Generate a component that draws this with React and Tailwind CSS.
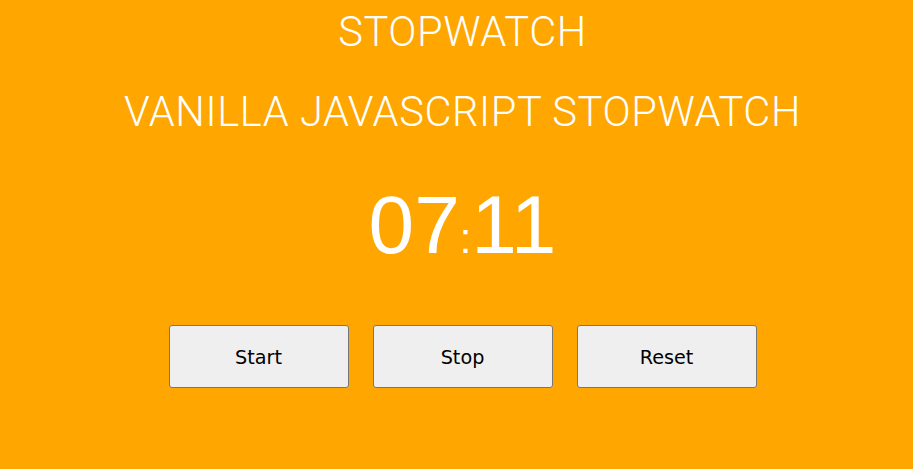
export default function App() {
  const buttons = ['Start', 'Stop', 'Reset'];

  return (
    <div className="min-h-[469px] bg-[#ffa600] pl-3 pt-[7px] text-center text-white">
      <h1 className="font-['Roboto',sans-serif] text-[41.6px] font-light uppercase leading-[49px] tracking-[0.6px]">
        Stopwatch
      </h1>
      <h2 className="mt-[31px] font-['Roboto',sans-serif] text-[41.6px] font-light uppercase leading-[49px] tracking-[0.6px]">
        Vanilla JavaScript Stopwatch
      </h2>
      <p className="mt-[48px] font-['Liberation_Sans',Arial,sans-serif] text-[41.6px] leading-none">
        <span className="text-[82px] leading-none">07</span>:<span className="text-[82px] leading-none">11</span>
      </p>
      <div className="mt-[59px] flex justify-center gap-6">
        {buttons.map((label) => (
          <button
            key={label}
            className="h-[63px] w-[180px] rounded-[3px] border border-[#767676] bg-[#efefef] pt-1 font-['DejaVu_Sans',sans-serif] text-[19.2px] text-black"
          >
            {label}
          </button>
        ))}
      </div>
    </div>
  );
}
